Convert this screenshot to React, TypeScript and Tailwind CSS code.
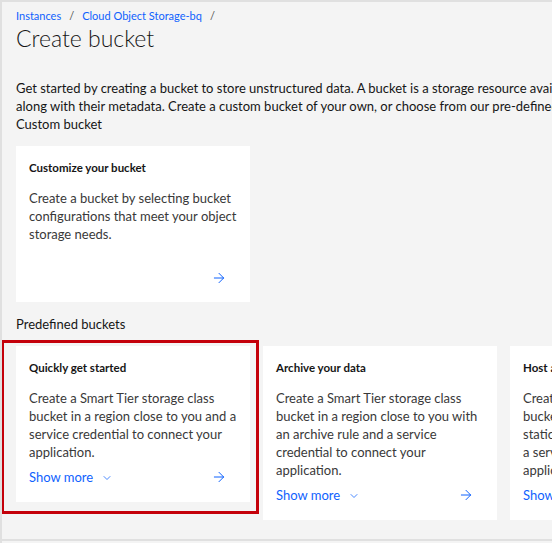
import { ChevronDown, ArrowRight } from "lucide-react"

interface TileProps {
    title: string
    body: string
    showMore?: boolean
}

function Tile({ title, body, showMore = true }: TileProps) {
    return (
        <div className="w-[234px] shrink-0 bg-white pt-[14px] pb-[16px] pl-[13px] pr-[10px] flex flex-col">
            <h4 className="text-[11.5px] leading-[16px] font-bold text-[#161616]">{title}</h4>
            <p className="mt-[13px] text-[13px] leading-[18px] text-[#393939]">{body}</p>
            {showMore && (
                <div className="mt-[7px] flex items-center justify-between h-[18px] pr-[13px]">
                    <button className="flex items-center gap-[8px] text-[13px] leading-[18px] text-[#0f62fe]">
                        Show more
                        <ChevronDown size={12} strokeWidth={1.5} className="mt-[1px]" />
                    </button>
                    <ArrowRight size={16} strokeWidth={1.5} className="text-[#0f62fe]" />
                </div>
            )}
        </div>
    )
}

export default function App() {
    return (
        <div
            className="h-[543px] w-[552px] overflow-hidden bg-[#f4f4f4] border-t-2 border-l-2 border-[#e0e0e0]"
            style={{ fontFamily: "Lato, 'Noto Sans', sans-serif" }}
        >
            <div className="h-[539px] border-b-2 border-[#e0e0e0] pl-[14px] pt-[6px]">
                {/* Breadcrumb */}
                <nav className="flex items-center gap-[8px] text-[11px] leading-[16px]">
                    <a className="text-[#0f62fe]">Instances</a>
                    <span className="text-[#525252]">/</span>
                    <a className="text-[#0f62fe]">Cloud Object Storage-bq</a>
                    <span className="text-[#525252]">/</span>
                </nav>
                <h1 className="text-[23px] leading-[28px] font-light text-[#161616]">Create bucket</h1>

                <p className="mt-[27px] whitespace-nowrap text-[13px] leading-[18px] text-[#161616]">
                    Get started by creating a bucket to store unstructured data. A bucket is a storage resource available for storing objects
                    <br />
                    along with their metadata. Create a custom bucket of your own, or choose from our pre-defined options.
                </p>
                <p className="text-[13px] leading-[18px] text-[#161616]">Custom bucket</p>

                {/* Custom tile */}
                <div className="mt-[13px] w-[234px] h-[156px] bg-white pt-[14px] pb-[16px] pl-[13px] pr-[10px] flex flex-col">
                    <h4 className="text-[11.5px] leading-[16px] font-bold text-[#161616]">Customize your bucket</h4>
                    <p className="mt-[13px] text-[13px] leading-[18px] text-[#393939]">
                        Create a bucket by selecting bucket configurations that meet your object storage needs.
                    </p>
                    <div className="mt-auto flex justify-end pr-[13px]">
                        <ArrowRight size={16} strokeWidth={1.5} className="text-[#0f62fe]" />
                    </div>
                </div>

                <p className="mt-[13px] text-[13px] leading-[18px] text-[#161616]">Predefined buckets</p>

                {/* Predefined tiles */}
                <div className="mt-[13px] flex items-start gap-[13px]">
                    <div className="relative shrink-0">
                        <Tile
                            title="Quickly get started"
                            body="Create a Smart Tier storage class bucket in a region close to you and a service credential to connect your application."
                        />
                        <span className="pointer-events-none absolute -left-[15px] -right-[9px] -top-[6px] -bottom-[12px] border-[3px] border-[#c4000a]" />
                    </div>
                    <Tile
                        title="Archive your data"
                        body="Create a Smart Tier storage class bucket in a region close to you with an archive rule and a service credential to connect your application."
                    />
                    <Tile
                        title="Host a static website"
                        body={"Create a Smart Tier storage class bucket in a region close to you with static website hosting enabled and a\u00a0service credential to connect your application."}
                    />
                </div>
            </div>
        </div>
    )
}
